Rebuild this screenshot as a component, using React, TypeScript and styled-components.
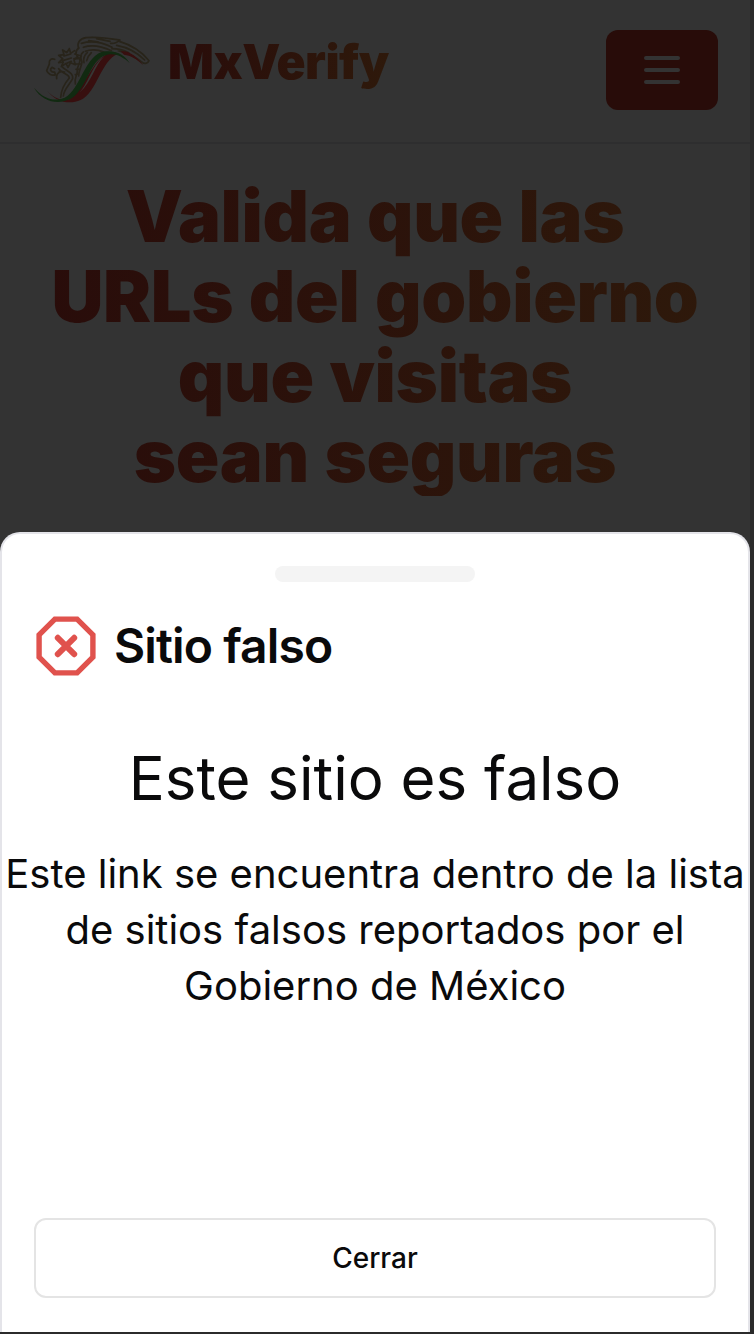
import React from "react";
import styled, { createGlobalStyle } from "styled-components";

const GlobalStyle = createGlobalStyle`
  * { box-sizing: border-box; }
  body { margin: 0; background: #2b2b2b; overflow: hidden; }
  h1, h2, p { margin: 0; }
`;

const Screen = styled.div`
  position: relative;
  width: 100%;
  height: 1334px;
  padding-right: 4px;
  overflow: hidden;
  font-family: Inter, "Liberation Sans", sans-serif;
  color: #0a0a0b;
`;

const Page = styled.div`
  height: 1332px;
  background: #333333;
`;

const Header = styled.header`
  height: 144px;
  padding: 30px 32px 32px;
  border-bottom: 2px solid #2e2e2f;
  display: flex;
  align-items: flex-start;
  justify-content: space-between;
`;

const Brand = styled.div`
  display: flex;
  align-items: flex-start;
`;

const Logo = styled.svg`
  display: block;
  width: 120px;
  height: 80px;
  margin: 0 16px 0 0;
`;

const gradientText = `
  background: linear-gradient(90deg, #290c0a, #2e190b);
  -webkit-background-clip: text;
  background-clip: text;
  color: transparent;
`;

const BrandName = styled.span`
  ${gradientText}
  font-size: 48px;
  line-height: 64px;
  font-weight: 900;
  letter-spacing: -0.5px;
  white-space: nowrap;
`;

const MenuButton = styled.button`
  width: 112px;
  height: 80px;
  padding: 0;
  border: 0;
  border-radius: 12px;
  background: #280c09;
  display: flex;
  flex-direction: column;
  align-items: center;
  justify-content: center;
  gap: 8px;
`;

const MenuLine = styled.span`
  width: 36px;
  height: 4px;
  border-radius: 2px;
  background: #333333;
`;

const Hero = styled.main`
  padding: 32px 32px 0;
`;

const Headline = styled.h1`
  ${gradientText}
  font-size: 72px;
  line-height: 80px;
  font-weight: 900;
  letter-spacing: -0.3px;
  word-spacing: 1.5px;
  text-align: center;
  white-space: nowrap;
`;

const Drawer = styled.section`
  position: absolute;
  left: 0;
  right: 4px;
  top: 532px;
  bottom: 2px;
  border: 2px solid #e4e4e9;
  border-bottom: 0;
  border-radius: 20px 20px 0 0;
  background: #ffffff;
  display: flex;
  flex-direction: column;
`;

const Handle = styled.div`
  width: 200px;
  height: 16px;
  margin: 32px auto 0;
  border-radius: 8px;
  background: #f4f4f4;
`;

const DrawerHeader = styled.div`
  display: flex;
  align-items: center;
  gap: 16px;
  padding: 32px 32px 0;
`;

const FalseIcon = styled.svg`
  display: block;
  width: 64px;
  height: 64px;
`;

const DrawerTitle = styled.h2`
  font-size: 48px;
  line-height: 64px;
  font-weight: 600;
  letter-spacing: -0.9px;
`;

const Message = styled.div`
  margin-top: 64px;
  text-align: center;
  white-space: nowrap;
`;

const MessageTitle = styled.p`
  font-size: 60px;
  line-height: 72px;
`;

const MessageText = styled.p`
  margin-top: 32px;
  font-size: 40px;
  line-height: 56px;
`;

const Footer = styled.div`
  margin-top: auto;
  padding: 0 32px 34px;
`;

const CloseButton = styled.button`
  width: 100%;
  height: 80px;
  padding: 0;
  border: 2px solid #e4e4e4;
  border-radius: 12px;
  background: #ffffff;
  color: #0a0a0b;
  font-family: inherit;
  font-size: 28px;
  font-weight: 500;
`;

function EagleLogo() {
  return (
    <Logo viewBox="36 30 360 240" fill="none" strokeLinecap="round" strokeLinejoin="round">
      {/* plumage, head and serpent */}
      <g stroke="#28241a" strokeWidth="5">
        <path d="M176 84c-6-14 2-28 22-31 34-4 70 2 102 7-8 8-16 11-28 10M184 70c28-8 60-4 92 12M190 82c30-10 58-2 84 10M196 94c20-8 40-4 56 2M206 62l30 4M230 56l40 8" />
        <path d="M298 64c34 10 66 30 89 58-4 10-14 10-22 4-18-14-40-26-70-34M290 76c34 6 62 22 84 44M276 86c16 0 34 4 50 12" />
        <path d="M176 84c-12 10-10 24 2 30 8 10-8 24-6 38 0 14-10 22-6 40M190 96c-12 8-8 20-4 30-2 16-10 26-10 42M202 98c-10 8-12 20-10 30M214 98c-8 8-12 14-14 24M164 102l20 6M162 116l20 0M166 132l16 0M168 148l12 0M166 164l10-2" />
        <path d="M164 92l-12 8-4-14-8 12-12-8 4 14-16 2 12 10-12 12 14-2-6 14 14-10 6 12 8-14 14 6-4-14 8-8M132 108l20-6M128 122l26-8M136 132l18-8" />
        <path d="M104 118c-10-4-18 2-16 14l-8 20c4 10 16 16 26 12l-2-8c-12 2-16-8-8-14l8 4M116 146c14 20 30 14 32 28-16 18-24 32-26 58M128 142c16 14 32 16 30 34-12 22-26 32-28 52M118 154l16 2M110 176c-2-14 4-20 16-22" />
      </g>
      {/* tricolour ribbon */}
      <path d="M78 209c20 22 44 35 68 29 40-14 70-124 122-138 12-4 20-2 26 1-50 18-64 118-112 139-34 14-72 8-104-31Z" fill="#380f0f" />
      <path d="M302 94c26-4 48 16 68 42-18-18-38-30-58-32Z" fill="#380f0f" />
      <path d="M42 203c30 35 62 43 92 30 48-22 60-132 122-139 36-4 60 14 73 35-26-23-52-34-80-20-42 22-54 108-100 129-36 16-82 8-107-35Z" fill="#112a11" />
      <path d="M180 216c26-30 40-88 72-106-28 26-38 78-72 106Z" fill="#373634" />
    </Logo>
  );
}

export default function App() {
  return (
    <>
      <GlobalStyle />
      <Screen>
        <Page>
          <Header>
            <Brand>
              <EagleLogo />
              <BrandName>MxVerify</BrandName>
            </Brand>
            <MenuButton aria-label="Menú">
              <MenuLine />
              <MenuLine />
              <MenuLine />
            </MenuButton>
          </Header>
          <Hero>
            <Headline>
              Valida que las<br />URLs del gobierno<br />que visitas<br />sean seguras
            </Headline>
          </Hero>
        </Page>
        <Drawer role="dialog" aria-labelledby="drawer-title">
          <Handle />
          <DrawerHeader>
            <FalseIcon viewBox="-32 -32 64 64" fill="none" stroke="#e0524d" strokeWidth="5.4">
              <path d="M-11.1-26.9h22.2l15.8 15.8v22.2L11.1 26.9h-22.2L-26.9 11.1v-22.2Z" />
              <path d="M-8.2-8.2 8.2 8.2M8.2-8.2-8.2 8.2" strokeWidth="6" strokeLinecap="round" />
            </FalseIcon>
            <DrawerTitle id="drawer-title">Sitio falso</DrawerTitle>
          </DrawerHeader>
          <Message>
            <MessageTitle>Este sitio es falso</MessageTitle>
            <MessageText>
              Este link se encuentra dentro de la lista<br />de sitios falsos reportados por el<br />Gobierno de México
            </MessageText>
          </Message>
          <Footer>
            <CloseButton>Cerrar</CloseButton>
          </Footer>
        </Drawer>
      </Screen>
    </>
  );
}
